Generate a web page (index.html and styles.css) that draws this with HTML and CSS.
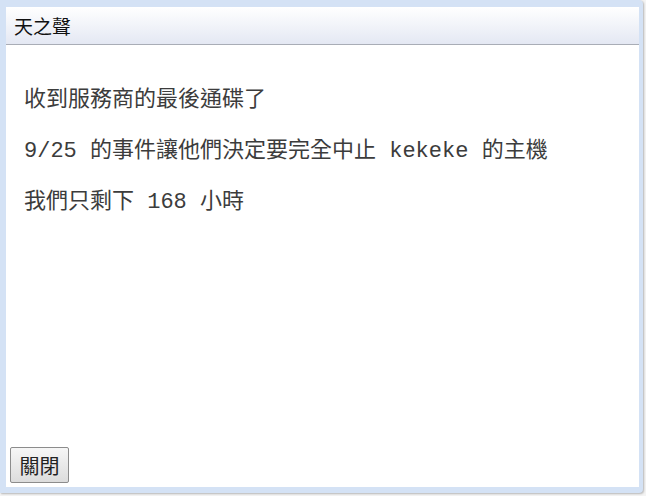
FILE: index.html
```html
<!DOCTYPE html>
<html lang="zh-Hant">
<head>
  <meta charset="UTF-8">
  <title>天之聲</title>
  <link rel="stylesheet" href="styles.css">
</head>
<body>
  <div class="frame">
    <div class="dialog">
      <div class="dialog-title">天之聲</div>
      <div class="dialog-body">
        <p>收到服務商的最後通碟了</p>
        <p>9/25 的事件讓他們決定要完全中止 kekeke 的主機</p>
        <p>我們只剩下 168 小時</p>
      </div>
      <div class="dialog-footer">
        <button class="close-btn">關閉</button>
      </div>
    </div>
  </div>
</body>
</html>
```

FILE: styles.css
```css
html, body {
  margin: 0;
  padding: 0;
  background: #f4f4f4;
}

body {
  width: 646px;
  height: 496px;
  overflow: hidden;
}

.frame {
  width: 643px;
  height: 493px;
  box-sizing: border-box;
  padding: 7px 4px 6px 6px;
  background: #d4e2f5;
  border-radius: 0 4px 4px 0;
  box-shadow: 1px 1px 2px rgba(0, 0, 0, 0.25);
  display: flex;
}

.dialog {
  flex: 1;
  display: flex;
  flex-direction: column;
  background: #ffffff;
}

.dialog-title {
  height: 37px;
  padding-left: 8px;
  line-height: 38px;
  font-family: "Noto Sans CJK TC", sans-serif;
  font-size: 19px;
  color: #111;
  background: linear-gradient(to bottom, #ffffff, #e4e8f3);
  border-bottom: 1px solid #a9adb6;
}

.dialog-body {
  flex: 1;
  padding: 41px 18px 0;
  font-family: "Liberation Mono", "Noto Sans CJK TC", monospace;
  font-size: 22px;
  color: #3c3c3c;
}

.dialog-body p {
  margin: 0 0 22px;
  line-height: 29px;
  white-space: nowrap;
}

.dialog-footer {
  padding: 0 0 4px 4px;
}

.close-btn {
  width: 59px;
  height: 36px;
  padding: 0;
  font-family: "Noto Sans CJK TC", sans-serif;
  font-size: 20px;
  color: #222;
  background: linear-gradient(to bottom, #f6f6f6, #dcdcdc);
  border: 1px solid #8c8c8c;
  border-radius: 2px;
}
```
